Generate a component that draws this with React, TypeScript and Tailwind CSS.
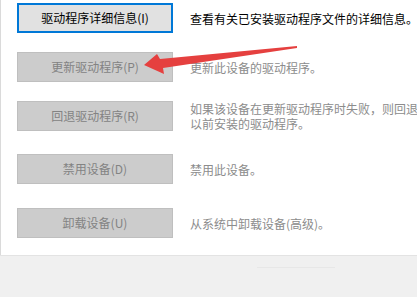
import React from 'react';

const rows = [
  { label: '驱动程序详细信息(I)', desc: ['查看有关已安装驱动程序文件的详细信息。'], focused: true, mt: 'mt-[3px]' },
  { label: '更新驱动程序(P)', desc: ['更新此设备的驱动程序。'], focused: false, mt: 'mt-[19px]' },
  {
    label: '回退驱动程序(R)',
    desc: ['如果该设备在更新驱动程序时失败，则回退到', '以前安装的驱动程序。'],
    focused: false,
    mt: 'mt-[19px]',
  },
  { label: '禁用设备(D)', desc: ['禁用此设备。'], focused: false, mt: 'mt-[23px]' },
  { label: '卸载设备(U)', desc: ['从系统中卸载设备(高级)。'], focused: false, mt: 'mt-[24px]' },
];

const App: React.FC = () => {
  return (
    <div
      className="relative w-[417px] h-[297px] overflow-hidden bg-[#f0f0f0] text-[12px]"
      style={{ fontFamily: '"Microsoft YaHei", "Noto Sans CJK SC", sans-serif' }}
    >
      {/* Driver tab panel */}
      <div className="flex h-[256px] bg-white border-b border-[#e3e3e3]">
        <div className="w-[3px] bg-[#fbfbfb]" />
        <div className="flex-1 flex flex-col border-l border-[#dadada]">
          {rows.map((row) => (
            <div key={row.label} className={`flex items-center ${row.mt}`}>
              <button
                className={`ml-[16px] w-[156px] h-[30px] shrink-0 flex items-center justify-center leading-none ${
                  row.focused
                    ? 'bg-[#e1e1e1] border-2 border-[#0078d7] text-black'
                    : 'bg-[#cccccc] border border-[#bfbfbf] text-[#838383]'
                }`}
              >
                {row.label}
              </button>
              <div
                className={`ml-[17px] whitespace-nowrap leading-[15px] ${
                  row.focused ? 'text-black' : 'text-[#8c8c8c]'
                }`}
              >
                {row.desc.map((line) => (
                  <div key={line}>{line}</div>
                ))}
              </div>
            </div>
          ))}
        </div>
      </div>

      <div className="ml-[257px] mt-[11px] w-[78px] h-px bg-[#e7e7e7]" />

      {/* Red annotation arrow */}
      <svg className="absolute inset-0 pointer-events-none" width="417" height="297" viewBox="0 0 417 297">
        <polygon
          points="144,65 157,54 160,59 297,46 297,48 163,68 164,74"
          fill="#e5403f"
        />
      </svg>
    </div>
  );
};

export default App;
